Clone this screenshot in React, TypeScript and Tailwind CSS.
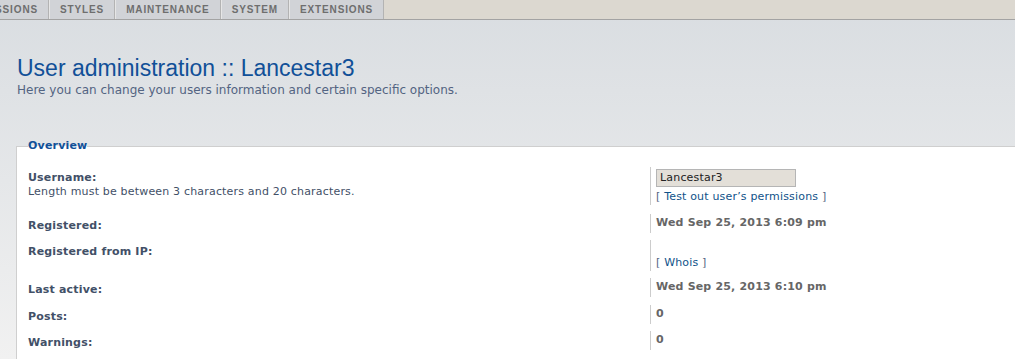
const tabs = ['PERMISSIONS', 'STYLES', 'MAINTENANCE', 'SYSTEM', 'EXTENSIONS'];

function Row({
  label,
  labelPad = 'pt-[5px]',
  children,
  className = '',
}: {
  label: React.ReactNode;
  labelPad?: string;
  children: React.ReactNode;
  className?: string;
}) {
  return (
    <div className={`flex ${className}`}>
      <div className={`w-[622px] shrink-0 ${labelPad}`}>{label}</div>
      <div className="border-l border-[#cccccc] pl-[5px] py-[1px] text-[11px] leading-[15px] font-bold text-[#666666]">
        {children}
      </div>
    </div>
  );
}

export default function App() {
  return (
    <div className="w-full h-[359px] overflow-hidden bg-gradient-to-b from-[#d9dde1] to-[#f1f1f1] font-['DejaVu_Sans',Verdana,sans-serif]">
      <nav className="flex h-[20px] bg-[#dcd8d0] border-b border-[#a3a3a3]">
        {tabs.map((t, i) => (
          <div
            key={t}
            className={`flex items-center h-[19px] px-[10px] bg-[#d1d3d7] border-l border-l-[#e6e6e6] border-r border-r-[#b3b3b3] font-['Liberation_Sans',Arial,sans-serif] font-bold text-[10px] tracking-[0.87px] text-[#6e6e6e] ${
              i === 0 ? 'ml-[-52px]' : ''
            }`}
          >
            {t}
          </div>
        ))}
      </nav>

      <div className="pl-[17px]">
        <h1 className="mt-[35px] font-['Liberation_Sans',Arial,sans-serif] text-[23px] leading-[26px] text-[#115098]">
          User administration :: Lancestar3
        </h1>
        <p className="mt-[2px] text-[12px] leading-[14px] text-[#536482]">
          Here you can change your users information and certain specific options.
        </p>
      </div>

      <fieldset className="ml-[16px] mt-[42px] w-[1010px] bg-white border border-[#cfcfcf] px-[11px] pb-[30px] tracking-[0.18px]">
        <legend className="px-0 text-[11px] leading-[14px] font-bold text-[#115098]">Overview</legend>

        <div className="mt-[14px] text-[#425067]">
          <Row
            labelPad="pt-[4px]"
            label={
              <>
                <div className="text-[11px] leading-[14px] font-bold">Username:</div>
                <div className="text-[11px] leading-[13px]">Length must be between 3 characters and 20 characters.</div>
              </>
            }
          >
            <div className="pt-[1px]">
              <div className="w-[140px] h-[18px] bg-[#e3dfd8] border border-[#b5b5b5] pl-[3px] text-[11px] leading-[16px] font-normal text-[#222222]">
                Lancestar3
              </div>
              <div className="mt-[2px] font-normal text-[#536482]">
                [ <span className="text-[#105289]">Test out user’s permissions</span> ]
              </div>
            </div>
          </Row>

          <Row className="mt-[9px]" label={<div className="text-[11px] leading-[14px] font-bold">Registered:</div>}>
            Wed Sep 25, 2013 6:09 pm
          </Row>

          <Row
            className="mt-[7px]"
            label={<div className="text-[11px] leading-[14px] font-bold">Registered from IP:</div>}
          >
            <div className="h-[15px]" />
            <div className="font-normal leading-[14px] text-[#536482]">
              [ <span className="text-[#105289]">Whois</span> ]
            </div>
          </Row>

          <Row className="mt-[7px]" label={<div className="text-[11px] leading-[14px] font-bold">Last active:</div>}>
            Wed Sep 25, 2013 6:10 pm
          </Row>

          <Row className="mt-[8px]" label={<div className="text-[11px] leading-[14px] font-bold">Posts:</div>}>
            0
          </Row>

          <Row className="mt-[7px]" label={<div className="text-[11px] leading-[14px] font-bold">Warnings:</div>}>
            0
          </Row>
        </div>
      </fieldset>
    </div>
  );
}
